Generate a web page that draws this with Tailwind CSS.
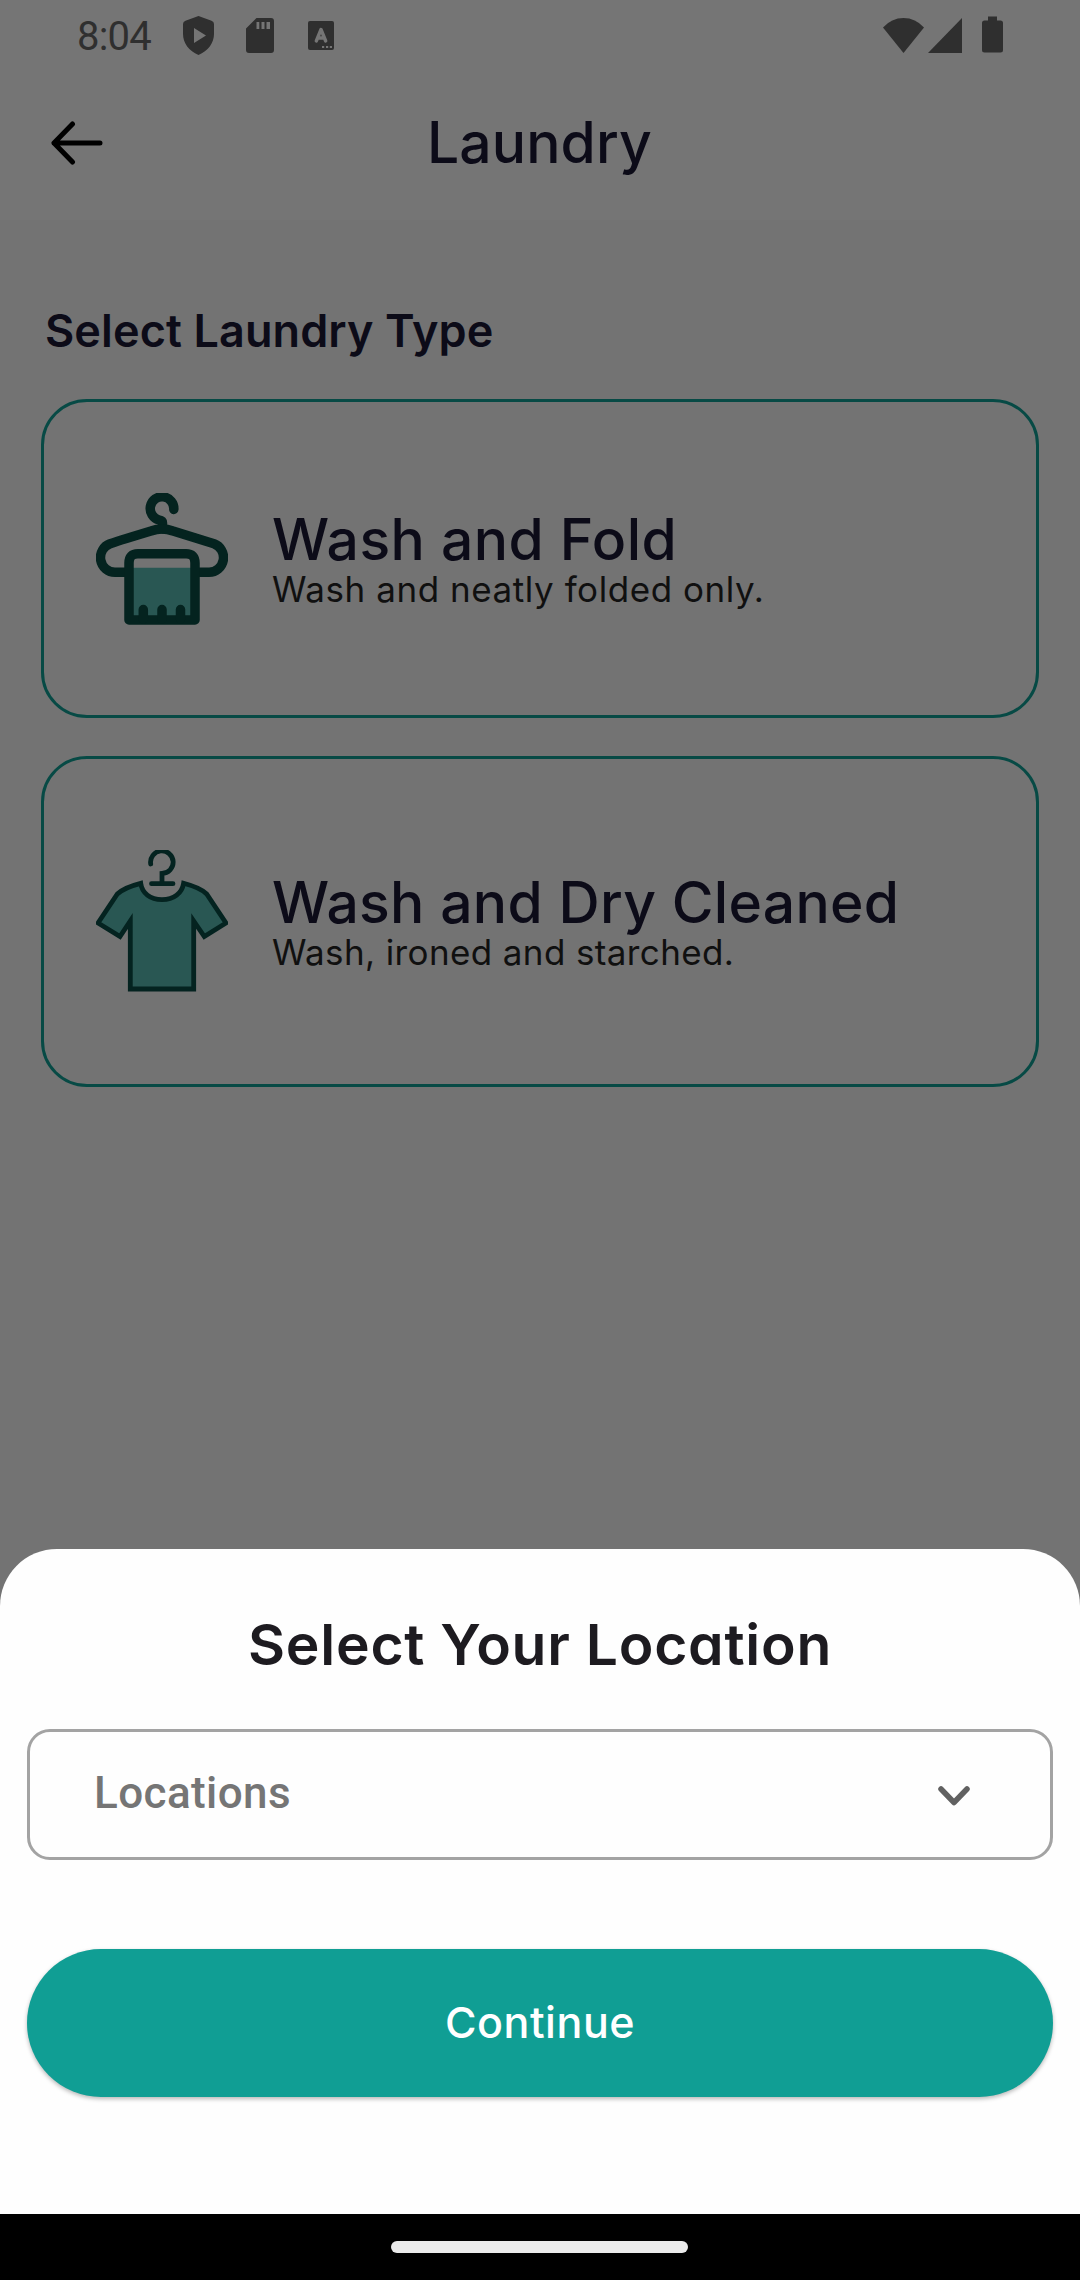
<!DOCTYPE html>
<html lang="en">
<head>
<meta charset="utf-8">
<title>Laundry</title>
<script src="https://cdn.jsdelivr.net/npm/@tailwindcss/browser@4"></script>
</head>
<body class="w-[1080px] h-[2280px] overflow-hidden bg-[#737373] font-['Inter',sans-serif] flex flex-col">

  <!-- Status bar and app bar -->
  <header class="h-[220px] shrink-0 bg-[#757575]">
    <div class="h-[70px] flex items-center pl-[77px] pr-[77px] text-[#2f2f2f]">
      <span class="w-[106px] font-['Roboto',sans-serif] text-[40px] leading-[68px] tracking-[-0.8px] pt-[4px]">8:04</span>
      <svg class="w-[31px] h-[39px]" viewBox="0 0 31 39" fill="currentColor" fill-rule="evenodd"><path d="M15.500 0L28.500 4.800Q31 5.600 31 8V18C31 27 25 35 15.500 39C6 35 0 27 0 18V8Q0 5.600 2.500 4.800ZM11 12V27L23 19.500Z"/></svg>
      <svg class="ml-[32px] w-[28px] h-[35px]" viewBox="0 0 28 35" fill="currentColor" fill-rule="evenodd"><path d="M10.500 0H25Q28 0 28 3V32Q28 35 25 35H3Q0 35 0 32V10.500ZM10.500 4V11H13.300V4ZM15.500 4V11H18.500V4ZM20.500 4V11H24V4Z"/></svg>
      <svg class="ml-[34px] w-[26px] h-[29px]" viewBox="0 0 26 29"><rect width="26" height="29" rx="2" fill="currentColor"/><path d="M8.300 20L13 8.500L17.700 20M9.800 17H16.200" fill="none" stroke="#757575" stroke-width="3.400" stroke-linecap="round" stroke-linejoin="round"/><path d="M14 25h2.200v2H14zM18 25h2.200v2H18zM21.800 25H24v2h-2.200z" fill="#757575"/></svg>
      <svg class="ml-auto w-[41px] h-[35px]" viewBox="0 0 41 35" fill="currentColor"><path d="M0 9.500Q8.500 0 20.500 0T41 9.500L20.500 35Z"/></svg>
      <svg class="ml-[4px] w-[34px] h-[35px]" viewBox="0 0 34 35" fill="currentColor"><path d="M34 0V35H0Z"/></svg>
      <svg class="ml-[20px] w-[21px] h-[37px] -mt-[1px]" viewBox="0 0 21 36" fill="currentColor"><path d="M6 0H15V4H18.500Q21 4 21 6.500V33.500Q21 36 18.500 36H2.500Q0 36 0 33.500V6.500Q0 4 2.500 4H6Z"/></svg>
    </div>
    <div class="h-[146px] flex items-center pl-[51px]">
      <svg class="w-[52px] h-[44px]" viewBox="0 0 52 44" fill="none" stroke="#000" stroke-width="5" stroke-linecap="round" stroke-linejoin="round"><path d="M49 22H3M21.500 3L3 22L21.500 41"/></svg>
      <h1 class="ml-[324px] text-[57px] leading-[70px] font-medium tracking-[0.1px] text-[#0c0b18]">Laundry</h1>
    </div>
  </header>

  <!-- Laundry types -->
  <main class="h-[1329px] shrink-0 px-[41px] pt-[84px] flex flex-col">
    <h2 class="pl-[4px] text-[45px] leading-[54px] font-semibold tracking-[0.1px] text-[#0c0b18]">Select Laundry Type</h2>
    <section class="mt-[41px] h-[319px] shrink-0 rounded-[46px] border-3 border-[#074a45] flex items-center pl-[52px]">
      <svg class="w-[132px] h-[132px]" viewBox="0 0 132 132" fill="none" stroke="#04231f" stroke-width="9.500" stroke-linecap="round" stroke-linejoin="round">
        <path d="M33 74.700H99V127H33Z" fill="#295753" stroke="none"/>
        <path d="M77.800 16.500A11.800 11.800 0 1 0 63 27Q66.500 27.500 66.500 30V36"/>
        <path d="M32 79.300H19A14.500 14.700 0 0 1 14 50.800Q17 49.500 55 38Q66 34 77 38L118 50.800A14.500 14.700 0 0 1 113 79.300H100"/>
        <path d="M33 127V70Q33 60.700 42 60.700H90Q99 60.700 99 70V127Z"/>
        <path d="M47.300 116.500V126M66 116.500V126M84.500 116.500V126"/>
      </svg>
      <div class="ml-[44px] pt-[6px]">
        <h3 class="text-[57px] leading-[54px] font-medium tracking-[0.45px] text-[#0c0b18]">Wash and Fold</h3>
        <p class="text-[35px] leading-[44px] tracking-[0.56px] text-[#101010]">Wash and neatly folded only.</p>
      </div>
    </section>
    <section class="mt-[38px] h-[331px] shrink-0 rounded-[46px] border-3 border-[#074a45] flex items-center pl-[52px]">
      <svg class="w-[132px] h-[143px]" viewBox="0 0 132 143" fill="none" stroke="#042320" stroke-width="4.800" stroke-linecap="round">
        <path d="M54.700 14A11.300 11.300 0 1 1 66 23.500V33M55.500 33.700H77"/>
        <path d="M44.700 33.300C46 43 54 49.600 66 49.600S86 43 87.600 33.300C96 35.500 105 38.500 110.700 44L130 73L108.300 86.500L97.700 71V139H34.300V71L24 86.500L2 73L21.300 44C27 38.500 36 35.500 44.700 33.300Z" fill="#295753"/>
      </svg>
      <div class="ml-[44px] pt-[6px]">
        <h3 class="text-[57px] leading-[54px] font-medium tracking-[0.3px] text-[#0c0b18]">Wash and Dry Cleaned</h3>
        <p class="text-[35px] leading-[44px] tracking-[0.38px] text-[#101010]">Wash, ironed and starched.</p>
      </div>
    </section>
  </main>

  <!-- Location sheet -->
  <section class="h-[665px] shrink-0 rounded-t-[57px] bg-[#fefefe] px-[27px] pt-[61px] flex flex-col">
    <h2 class="pl-[221px] text-[57px] leading-[70px] font-semibold tracking-[0.75px] text-[#1d1b20] [font-feature-settings:'cv11']">Select Your Location</h2>
    <div class="mt-[49px] h-[131px] shrink-0 rounded-[23px] border-3 border-[#a3a3a3] flex items-center justify-between pl-[64px] pr-[80px]">
      <span class="font-['Roboto',sans-serif] text-[44px] leading-[52px] font-medium tracking-[0.4px] text-[#757575] -mt-[4px]">Locations</span>
      <svg class="w-[32px] h-[20px] mt-[3px]" viewBox="0 0 32 20" fill="none" stroke="#616161" stroke-width="5.500" stroke-linecap="round" stroke-linejoin="round"><path d="M3 3L16 16.500L29 3"/></svg>
    </div>
    <button class="mt-[89px] h-[148px] shrink-0 rounded-[74px] bg-[#109e94] shadow-[0_2px_4px_rgba(0,0,0,0.28)] text-[43px] leading-[54px] pb-[3px] font-medium tracking-[0.55px] text-white">Continue</button>
  </section>

  <!-- Gesture navigation bar -->
  <nav class="h-[66px] shrink-0 bg-black flex items-center justify-center pr-[1px]">
    <div class="w-[297px] h-[12px] rounded-full bg-[#ebebeb]"></div>
  </nav>
</body>
</html>
